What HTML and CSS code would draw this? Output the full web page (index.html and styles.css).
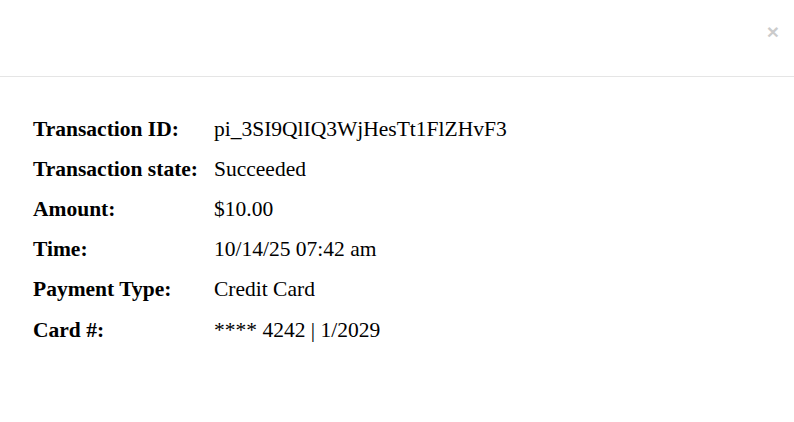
FILE: index.html
```html
<!DOCTYPE html>
<html>
<head>
<meta charset="utf-8">
<link rel="stylesheet" href="styles.css">
</head>
<body>
<div class="modal">
  <div class="modal-header">
    <span class="close">&times;</span>
  </div>
  <div class="modal-body">
    <div class="details">
      <div class="label">Transaction ID:</div><div class="value">pi_3SI9QlIQ3WjHesTt1FlZHvF3</div>
      <div class="label">Transaction state:</div><div class="value">Succeeded</div>
      <div class="label">Amount:</div><div class="value">$10.00</div>
      <div class="label">Time:</div><div class="value">10/14/25 07:42 am</div>
      <div class="label">Payment Type:</div><div class="value">Credit Card</div>
      <div class="label">Card #:</div><div class="value">**** 4242 | 1/2029</div>
    </div>
  </div>
</div>
</body>
</html>
```
FILE: styles.css
```css
html, body {
  margin: 0;
  padding: 0;
  background: #fff;
}
body {
  font-family: "Liberation Serif", "Times New Roman", serif;
  color: #000;
}
.modal-header {
  height: 76px;
  border-bottom: 1px solid #e5e5e5;
  display: flex;
  justify-content: flex-end;
  align-items: flex-start;
  padding: 0 15px;
}
.close {
  font-family: "Liberation Sans", Arial, sans-serif;
  font-size: 21px;
  font-weight: bold;
  line-height: 1;
  color: #000;
  opacity: 0.2;
  margin-top: 21px;
}
.modal-body {
  padding: 32px 33px;
}
.details {
  display: grid;
  grid-template-columns: 181px auto;
  grid-auto-rows: 40.2px;
  align-items: center;
  font-size: 21.5px;
}
.label {
  font-weight: bold;
}
```
